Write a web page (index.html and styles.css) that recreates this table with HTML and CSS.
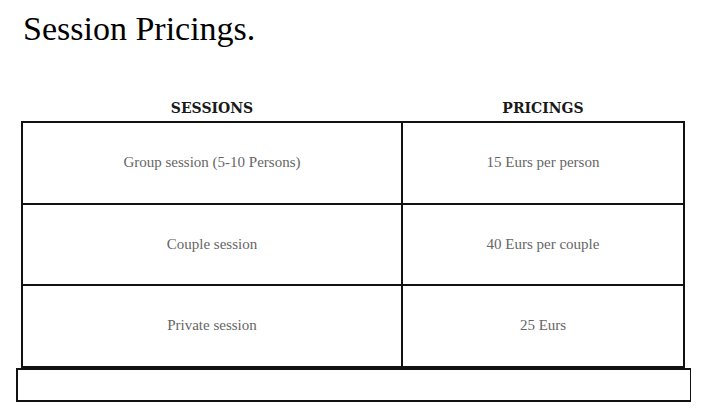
FILE: index.html
```html
<!DOCTYPE html>
<html lang="en">
<head>
<meta charset="utf-8">
<title>Session Pricings</title>
<link rel="stylesheet" href="styles.css">
</head>
<body>
<h1 class="title">Session Pricings.</h1>
<section class="pricing">
  <table class="price-table">
    <thead>
      <tr><th class="head">SESSIONS</th><th class="head">PRICINGS</th></tr>
    </thead>
    <tbody>
      <tr><td class="cell">Group session (5-10 Persons)</td><td class="cell">15 Eurs per person</td></tr>
      <tr><td class="cell">Couple session</td><td class="cell">40 Eurs per couple</td></tr>
      <tr><td class="cell">Private session</td><td class="cell">25 Eurs</td></tr>
    </tbody>
  </table>
  <div class="footer-box"></div>
</section>
</body>
</html>
```
FILE: styles.css
```css
html, body {
  margin: 0;
  padding: 0;
  background: #fff;
}
body {
  font-family: "Liberation Serif", serif;
  color: #000;
}
.title {
  margin: 0;
  padding: 9px 0 0 23px;
  font-size: 34px;
  font-weight: normal;
  line-height: 40px;
  height: 61px;
}
.pricing {
  width: 675px;
  margin-left: 16px;
}
.price-table {
  border-collapse: collapse;
  width: 664px;
  margin-left: 5px;
}
.head {
  font-family: "DejaVu Serif", serif;
  font-weight: bold;
  font-size: 14px;
  color: #1a1a1a;
  height: 47px;
  padding: 0 0 4px 0;
  vertical-align: bottom;
  line-height: 18px;
}
.head:first-child { width: 380px; }
.cell {
  border: 2px solid #111;
  height: 79.5px;
  padding: 0;
  text-align: center;
  vertical-align: middle;
  font-size: 15px;
  color: #666;
}
.footer-box {
  height: 30px;
  border: 1px solid #111;
  border-width: 2px 1px 2px 2px;
}
```
